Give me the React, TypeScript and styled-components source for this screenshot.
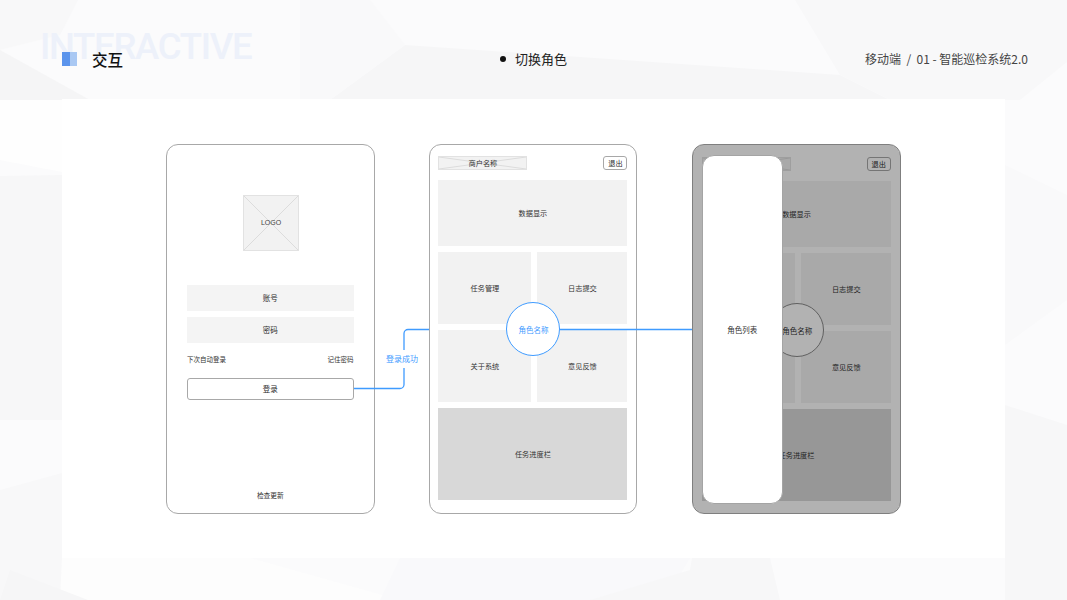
import React, {FC} from 'react';
import styled, {createGlobalStyle} from 'styled-components';

const BLUE = '#3f9bff';
const FONT = '"Noto Sans CJK SC", "Noto Sans", sans-serif';

const GlobalStyle = createGlobalStyle`
    html, body {
        margin: 0;
        padding: 0;
        background: #fbfbfc;
    }
    body {
        font-family: ${FONT};
    }
`;

const Page = styled.div`
    position: relative;
    width: 1067px;
    height: 600px;
    overflow: hidden;
    background: #fbfbfc;
`;

const Backdrop = styled.svg`
    position: absolute;
    inset: 0;
`;

const Header = styled.header`
    position: relative;
    height: 99px;
    padding: 0 39px 0 62px;
    box-sizing: border-box;
    display: grid;
    grid-template-columns: 437px 1fr auto;
    align-items: start;
`;

const Watermark = styled.div`
    position: absolute;
    left: 40px;
    top: 25px;
    font-family: Roboto, sans-serif;
    font-size: 36.500px;
    font-weight: 500;
    letter-spacing: -1.300px;
    line-height: 44px;
    color: #edf1fa;
`;

const TitleGroup = styled.div`
    position: relative;
    margin-top: 48px;
    display: flex;
    align-items: center;
    gap: 15px;
    height: 22px;
`;

const Marker = styled.span`
    width: 15px;
    height: 14px;
    background: linear-gradient(to right, #5b94ec 0 50%, #a9c8f3 50% 100%);
`;

const Title = styled.h1`
    margin: 0;
    font-size: 15.500px;
    font-weight: 500;
    line-height: 22px;
    color: #111;
`;

const Section = styled.div`
    margin-top: 48px;
    display: flex;
    align-items: center;
    gap: 9px;
    font-size: 13px;
    line-height: 22px;
    color: #222;
`;

const Bullet = styled.span`
    width: 6px;
    height: 6px;
    margin-left: 1px;
    border-radius: 50%;
    background: #111;
`;

const Crumb = styled.div`
    margin-top: 48px;
    font-size: 12px;
    line-height: 22px;
    color: #444;
    white-space: pre;
`;

const Panel = styled.main`
    position: relative;
    width: 943px;
    height: 459px;
    margin-left: 62px;
    padding: 45px 0 0 104px;
    box-sizing: border-box;
    background: #fff;
    display: flex;
    gap: 54.400px;
    align-items: flex-start;
`;

const Phone = styled.section<{$offset?: number; $edge?: string; $width?: number}>`
    position: relative;
    width: ${p => p.$width ?? 208.5}px;
    height: 370px;
    box-sizing: border-box;
    border: 1px solid ${p => p.$edge ?? '#a8a8a8'};
    border-radius: 12px;
    overflow: hidden;
    display: flex;
    flex-direction: column;
    padding: ${p => p.$offset ?? 0}px 0 0 ${p => p.$offset ?? 0}px;
    color: #2a2a2a;
`;

const LoginBody = styled.div`
    flex: 1;
    padding: 50px 20px 12px;
    display: flex;
    flex-direction: column;
    align-items: stretch;
`;

const Placeholder = styled.div`
    position: relative;
    box-sizing: border-box;
    background: #f2f2f2;
    border: 1px solid #e2e2e2;
    display: flex;
    align-items: center;
    justify-content: center;
`;

const CrossLines = styled.svg`
    position: absolute;
    inset: 0;
    width: 100%;
    height: 100%;
`;

const PlaceholderText = styled.span`
    position: relative;
`;

const Logo = styled(Placeholder)`
    width: 56px;
    height: 56px;
    padding-bottom: 2px;
    align-self: flex-start;
    margin: 0 0 34px 56px;
    font-family: 'Liberation Sans', sans-serif;
    font-size: 7px;
    color: #444;
`;

const Field = styled.div`
    height: 26px;
    padding-bottom: 2px;
    box-sizing: border-box;
    margin-bottom: 6px;
    background: #f4f4f4;
    display: flex;
    align-items: center;
    justify-content: center;
    font-size: 7.500px;
`;

const OptionRow = styled.div`
    height: 20px;
    display: flex;
    align-items: center;
    justify-content: space-between;
    font-size: 6.500px;
    color: #333;
`;

const LoginButton = styled.button`
    margin-top: 9px;
    height: 22px;
    padding: 0 0 2px;
    background: #fff;
    border: 1px solid #a8a8a8;
    border-radius: 3px;
    font-family: ${FONT};
    font-size: 7.500px;
    color: #2a2a2a;
`;

const UpdateLink = styled.div`
    margin-top: auto;
    text-align: center;
    font-size: 6.700px;
    line-height: 12px;
    color: #333;
`;

const Dashboard = styled.div`
    flex: 1;
    padding: 11px 9px 13px 8.500px;
    display: flex;
    flex-direction: column;
    gap: 6px;
`;

const TopBar = styled.div`
    height: 14px;
    margin-bottom: 4px;
    display: flex;
    justify-content: space-between;
    align-items: center;
`;

const Merchant = styled(Placeholder)`
    width: 89px;
    height: 14px;
    font-size: 7.200px;
    color: #333;
`;

const Exit = styled.div`
    width: 24px;
    height: 14px;
    box-sizing: border-box;
    border: 1px solid #a8a8a8;
    border-radius: 3px;
    background: #fff;
    display: flex;
    align-items: center;
    justify-content: center;
    font-size: 7.200px;
`;

const Block = styled.div<{$height: number; $tone?: string}>`
    height: ${p => p.$height}px;
    padding-bottom: 1px;
    box-sizing: border-box;
    background: ${p => p.$tone ?? '#f2f2f2'};
    display: flex;
    align-items: center;
    justify-content: center;
    font-size: 7.200px;
    color: #333;
`;

const Tiles = styled.div`
    position: relative;
    display: grid;
    grid-template-columns: 93px 90px;
    grid-auto-rows: 72px;
    gap: 6px;
`;

const RoleBadge = styled.div<{$color: string; $edge: string}>`
    position: absolute;
    left: 68px;
    top: 50px;
    width: 54px;
    height: 54px;
    box-sizing: border-box;
    border-radius: 50%;
    border: 1.500px solid ${p => p.$edge};
    background: #fff;
    color: ${p => p.$color};
    display: flex;
    align-items: center;
    justify-content: center;
    font-size: 7.500px;
`;

const Dim = styled.div`
    position: absolute;
    inset: 0;
    background: rgba(0, 0, 0, 0.3);
`;

const Drawer = styled.aside`
    position: absolute;
    left: 9px;
    top: 10px;
    width: 81px;
    height: 349px;
    box-sizing: border-box;
    border: 1px solid #a4a4a4;
    border-radius: 12px;
    background: #fff;
    display: flex;
    align-items: center;
    justify-content: center;
    font-size: 7.500px;
    color: #333;
`;

const Wires = styled.svg`
    position: absolute;
    inset: 0;
    pointer-events: none;
`;

const WireLabel = styled.span`
    position: absolute;
    left: 323px;
    top: 251px;
    padding: 2px 1px;
    background: #fff;
    font-size: 8px;
    line-height: 14px;
    color: ${BLUE};
`;

const Cross: FC = () => (
    <CrossLines viewBox='0 0 100 100' preserveAspectRatio='none'>
        <path d='M0 0 L100 100 M100 0 L0 100' stroke='#dcdcdc' strokeWidth='1' vectorEffect='non-scaling-stroke' />
    </CrossLines>
);

type DashboardProps = {
    badgeColor: string;
    badgeEdge: string;
};

const DashboardContent: FC<DashboardProps> = ({badgeColor, badgeEdge}) => (
    <Dashboard>
        <TopBar>
            <Merchant>
                <Cross />
                <PlaceholderText>商户名称</PlaceholderText>
            </Merchant>
            <Exit>退出</Exit>
        </TopBar>
        <Block $height={66}>数据显示</Block>
        <Tiles>
            <Block $height={72}>任务管理</Block>
            <Block $height={72}>日志提交</Block>
            <Block $height={72}>关于系统</Block>
            <Block $height={72}>意见反馈</Block>
            <RoleBadge $color={badgeColor} $edge={badgeEdge}>角色名称</RoleBadge>
        </Tiles>
        <Block $height={92} $tone='#d8d8d8'>任务进度栏</Block>
    </Dashboard>
);

const App: FC = () => (
    <Page>
        <GlobalStyle />
        <Backdrop width='1067' height='600' viewBox='0 0 1067 600'>
            <polygon points='0,0 78,0 60,35 0,50' fill='#f8f8f9' />
            <polygon points='0,50 90,100 0,110' fill='#f5f5f6' />
            <polygon points='0,100 62,100 62,172 0,160' fill='#fefefe' />
            <polygon points='0,176 62,175 62,420 0,420' fill='#f7f7f8' />
            <polygon points='0,490 62,473 62,600 0,600' fill='#f8f8f9' />
            <polygon points='405,45 840,75 890,100 330,100' fill='#f6f6f7' />
            <polygon points='300,0 370,0 405,45 330,100 300,100' fill='#f9f9fa' />
            <polygon points='795,0 1067,0 1067,62 1020,100 890,100 840,75' fill='#f8f8f9' />
            <polygon points='1005,165 1067,195 1067,300 1005,345' fill='#f9f9fa' />
            <polygon points='1005,405 1067,425 1067,600 1005,600' fill='#f7f7f8' />
            <polygon points='62,558 250,558 400,600 60,600' fill='#fdfdfd' />
            <polygon points='10,570 88,600 0,600' fill='#f6f6f7' />
            <polygon points='400,558 690,558 680,575 590,600 380,600' fill='#f9f9fb' />
            <polygon points='692,558 770,558 780,600 590,600 690,570' fill='#f7f7f8' />
        </Backdrop>
        <Header>
            <Watermark>INTERACTIVE</Watermark>
            <TitleGroup>
                <Marker />
                <Title>交互</Title>
            </TitleGroup>
            <Section>
                <Bullet />
                切换角色
            </Section>
            <Crumb>移动端  /  01 - 智能巡检系统2.0</Crumb>
        </Header>
        <Panel>
            <Phone>
                <LoginBody>
                    <Logo>
                        <Cross />
                        <PlaceholderText>LOGO</PlaceholderText>
                    </Logo>
                    <Field>账号</Field>
                    <Field>密码</Field>
                    <OptionRow>
                        <span>下次自动登录</span>
                        <span>记住密码</span>
                    </OptionRow>
                    <LoginButton>登录</LoginButton>
                    <UpdateLink>检查更新</UpdateLink>
                </LoginBody>
            </Phone>
            <Phone>
                <DashboardContent badgeColor={BLUE} badgeEdge={BLUE} />
            </Phone>
            <Phone $offset={1} $edge='#7f7f7f' $width={209}>
                <DashboardContent badgeColor='#333' badgeEdge='#8a8a8a' />
                <Dim />
                <Drawer>角色列表</Drawer>
            </Phone>
            <Wires width='943' height='459' viewBox='0 0 943 459'>
                <path
                    d='M292 289.500 H338 a4 4 0 0 0 4 -4 V234.500 a4 4 0 0 1 4 -4 H367'
                    fill='none'
                    stroke={BLUE}
                    strokeWidth='1.300'
                />
                <path d='M498 230.500 H630' fill='none' stroke={BLUE} strokeWidth='1.300' />
            </Wires>
            <WireLabel>登录成功</WireLabel>
        </Panel>
    </Page>
);

export default App;
